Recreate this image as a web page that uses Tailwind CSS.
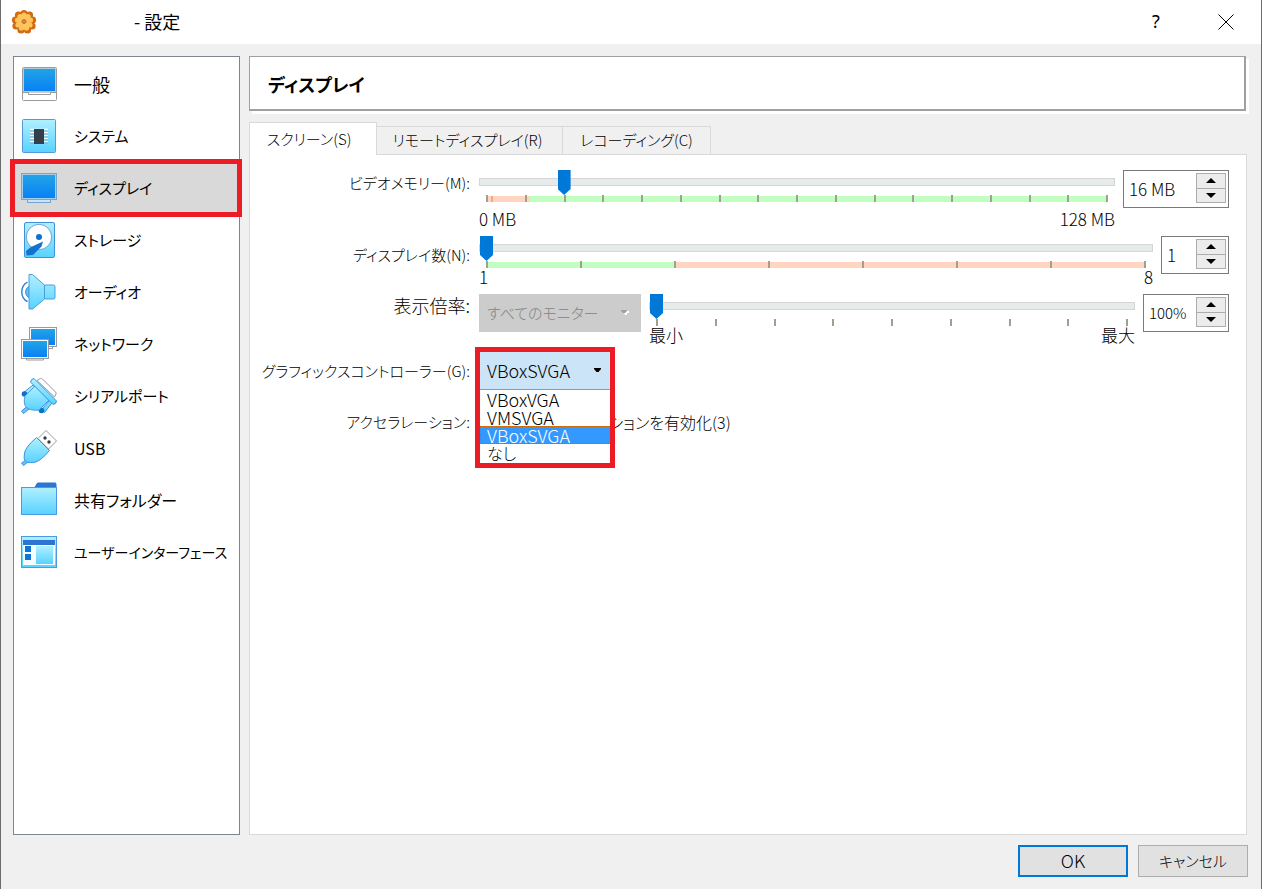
<!DOCTYPE html>
<html lang="ja">
<head>
    <meta charset="UTF-8">
    <meta name="viewport" content="width=device-width, initial-scale=1.0">
    <title>設定</title>
    <script src="https://cdn.jsdelivr.net/npm/@tailwindcss/browser@4"></script>
</head>
<body class="h-screen flex flex-col bg-[#f0f0f0] border-x border-[#6b6b6b] text-black text-[18px] leading-[18px] font-['Noto_Sans_CJK_JP',sans-serif] [font-feature-settings:'palt'] overflow-hidden">
    <!-- Shared gradients -->
    <svg class="absolute size-0" aria-hidden="true">
        <defs>
            <linearGradient id="screen" x1="0" y1="0" x2="0" y2="1"><stop offset="0" stop-color="#22a4e6"/><stop offset="1" stop-color="#0880f5"/></linearGradient>
            <linearGradient id="sky" x1="0" y1="0" x2="0" y2="1"><stop offset="0" stop-color="#b0f0ff"/><stop offset="1" stop-color="#58d2ff"/></linearGradient>
        </defs>
    </svg>

    <!-- Title bar -->
    <header class="h-11 shrink-0 flex items-center bg-white pl-[10px] pr-[17px]">
        <svg class="size-[26px]" viewBox="0 0 26 26">
            <g fill="#d26a10">
                <circle cx="13" cy="4.500" r="3.600"/><circle cx="18.500" cy="6" r="3.600"/><circle cx="21.500" cy="11" r="3.600"/><circle cx="21" cy="17" r="3.600"/><circle cx="16.500" cy="21" r="3.600"/><circle cx="10" cy="21" r="3.600"/><circle cx="5" cy="17" r="3.600"/><circle cx="4.500" cy="11" r="3.600"/><circle cx="7.500" cy="6" r="3.600"/>
            </g>
            <g fill="#ffc45e">
                <circle cx="13" cy="6" r="2.600"/><circle cx="17" cy="7.500" r="2.600"/><circle cx="19.500" cy="11" r="2.600"/><circle cx="19" cy="16" r="2.600"/><circle cx="15.500" cy="19" r="2.600"/><circle cx="10.500" cy="19" r="2.600"/><circle cx="7" cy="16" r="2.600"/><circle cx="6.500" cy="11" r="2.600"/><circle cx="9" cy="7.500" r="2.600"/><circle cx="13" cy="12.500" r="7"/>
            </g>
            <circle cx="13" cy="12.500" r="2" fill="#d98a3a" stroke="#c2701c"/>
        </svg>
        <h1 class="ml-[97px] pb-0.5">- 設定</h1>
        <button class="ml-auto w-9 h-8 pb-0.5 text-center font-['Noto_Sans',sans-serif]" aria-label="ヘルプ">?</button>
        <button class="ml-[34px] w-9 h-8 flex items-center justify-center" aria-label="閉じる">
            <svg class="size-4" viewBox="0 0 16 16" fill="none" stroke="#000"><path d="M.5 .5l15 15M15.500 .5l-15 15"/></svg>
        </button>
    </header>

    <main class="flex-1 min-h-0 flex gap-[9px] pt-3 pl-3 pr-[14px]">
        <!-- Categories -->
        <nav class="w-[227px] shrink-0 bg-white border border-[#7f8590] pt-px">
            <ul class="text-[15px] whitespace-nowrap">
                <li><a href="#" class="h-[52px] flex items-center gap-[17px] pl-[7px] text-[18px]">
                    <svg class="size-9" viewBox="0 0 36 36"><rect x="1.500" y="1.500" width="34" height="33" rx="1" fill="#fff" stroke="#9a9a9a"/><rect x="2.500" y="2.500" width="32" height="23" fill="url(#screen)" stroke="#b5cbd8"/><path d="M1 26.500h35" stroke="#9a9a9a"/><path d="M7.500 26.500v2h22v-2" fill="#fff" stroke="#9a9a9a"/></svg>
                    一般</a></li>
                <li><a href="#" class="h-[52px] flex items-center gap-[17px] pl-[7px]">
                    <svg class="size-9" viewBox="0 0 36 36"><rect x="1.500" y="1.500" width="33" height="33" rx="1" fill="url(#sky)" stroke="#559ad8"/><path d="M9 11.500h18M9 14.500h18M9 17.500h18M9 20.500h18M9 23.500h18" stroke="#fff" stroke-width="1.500"/><path d="M9 13h18M9 16h18M9 19h18M9 22h18M9 25h18" stroke="#6fa9c6" stroke-width=".8"/><rect x="13" y="11" width="10" height="15" fill="#343f4b"/></svg>
                    システム</a></li>
                <li class="relative"><a href="#" aria-current="page" class="h-[52px] flex items-center gap-[17px] pl-[7px] bg-[#d9d9d9]">
                    <svg class="size-9" viewBox="0 0 36 36"><rect x="6.500" y="29.500" width="23" height="3" fill="#c9e4fa" stroke="#76a6cc"/><rect x=".5" y="3.500" width="35" height="26" fill="#a5cdec" stroke="#76a6cc"/><rect x="2" y="5" width="32" height="23" fill="url(#screen)"/></svg>
                    ディスプレイ</a>
                    <span class="absolute -left-1 -right-[3px] -inset-y-[3px] border-[5px] border-[#ed1c24] pointer-events-none"></span></li>
                <li><a href="#" class="h-[52px] flex items-center gap-[17px] pl-[7px]">
                    <svg class="size-9" viewBox="0 0 36 36"><rect x="3.500" y=".5" width="30" height="35" rx="1.500" fill="url(#sky)" stroke="#3f91dc"/><circle cx="18" cy="15" r="12.700" fill="#fff" stroke="#6aa6d8"/><circle cx="18" cy="15" r="3" fill="#0e6fce"/><path d="M22 19.500l-1.500 5L12 33l-6.500.5-.5-4.500L10 25z" fill="#1472cf"/></svg>
                    ストレージ</a></li>
                <li><a href="#" class="h-[52px] flex items-center gap-[17px] pl-[7px]">
                    <svg class="size-9" viewBox="0 0 36 36"><path d="M8 12.500Q4.500 14 4.500 18T8 23.500z" fill="#5fc4f5" stroke="#3f91dc"/><path d="M6.500 8Q.8 11 .8 18t5.700 9.500" fill="none" stroke="#2f7fd2" stroke-width="1.400"/><path d="M8 .5h3.500L23.500 11H32.500q1.500 0 1.500 2v10q0 2-1.500 2h-9L11.500 35H8z" fill="url(#sky)" stroke="#4a9be0"/><path d="M23.500 11v14" stroke="#4a9be0"/></svg>
                    オーディオ</a></li>
                <li><a href="#" class="h-[52px] flex items-center gap-[17px] pl-[7px]">
                    <svg class="size-9" viewBox="0 0 36 36"><path d="M14 20.500h17.500v2H14z" fill="#fff" stroke="#9a9a9a"/><rect x="8.500" y="1.500" width="27" height="19" fill="#fff" stroke="#9a9a9a"/><rect x="10" y="3" width="24" height="16" fill="url(#screen)"/><path d="M5.500 31.500h17v2.500h-17z" fill="#fff" stroke="#9a9a9a"/><rect x=".5" y="13.500" width="27" height="19" fill="#fff" stroke="#9a9a9a"/><rect x="2" y="15" width="24" height="16" fill="url(#screen)"/></svg>
                    ネットワーク</a></li>
                <li><a href="#" class="h-[52px] flex items-center gap-[17px] pl-[7px]">
                    <svg class="size-9" viewBox="0 0 36 36"><path d="M16 2.500l3.500-2q1-.5 2 .5l13 13q1 1 .5 2l-1.500 3z" fill="#fff" stroke="#9a9a9a"/><path d="M12 7L2 15l3 3.500 9-8.500zM29 22l-9 10 3.500 2.500L31 25z" fill="url(#sky)" stroke="#3f91dc"/><circle cx="3.500" cy="16" r="2.800" fill="#0e6fce"/><circle cx="20.500" cy="32.500" r="2.800" fill="#0e6fce"/><path d="M6 28.500L.5 33l2 2.500L8 31z" fill="#62c8f7" stroke="#3f91dc"/><path d="M14 8L4 18q-2 8 1.500 11.500Q10 33 18 32L28 22z" fill="url(#sky)" stroke="#4a9be0"/><path d="M13 .5q-2.500 0-3.500 3.500L32 26.500q3.500-.5 3.500-3.500z" fill="url(#sky)" stroke="#3f91dc"/></svg>
                    シリアルポート</a></li>
                <li><a href="#" class="h-[52px] flex items-center gap-[17px] pl-[7px] text-[16px]">
                    <svg class="size-9" viewBox="0 0 36 36"><path d="M17 8.500l8-8L35.500 11l-8 8z" fill="#fff" stroke="#9a9a9a"/><circle cx="24" cy="8" r="1.700" fill="#343f4b"/><circle cx="28" cy="12" r="1.700" fill="#343f4b"/><path d="M6 29.500L.5 33l2 2.500L7 32z" fill="#62c8f7" stroke="#3f91dc"/><path d="M15.500 7.500L28.500 20.500Q19 32 12.500 32.500q-7 .5-8-1.500-2-1-1-8Q4.500 17 15.500 7.500z" fill="url(#sky)" stroke="#3f91dc"/></svg>
                    USB</a></li>
                <li><a href="#" class="h-[52px] flex items-center gap-[17px] pl-[7px] text-[16px]">
                    <svg class="size-9" viewBox="0 0 36 36"><path d="M13 6l3-5q.5-.5 1-.5H34.500l1 1.500v6H13z" fill="#2a76d2"/><rect x=".5" y="5.500" width="35" height="27" fill="url(#sky)" stroke="#4a9be0"/></svg>
                    共有フォルダー</a></li>
                <li><a href="#" class="h-[52px] flex items-center gap-[17px] pl-[7px] text-[14px]">
                    <svg class="size-9" viewBox="0 0 36 36"><rect x=".5" y="2.500" width="35" height="31" fill="url(#sky)" stroke="#4a9be0"/><rect x="2" y="6" width="32" height="5" fill="#2a76d2"/><rect x="2" y="11" width="32" height="20" fill="#f4fdff"/><rect x="4" y="12" width="6" height="6" fill="#1173d6"/><rect x="4" y="20" width="6" height="6" fill="#1173d6"/><rect x="15" y="12" width="17" height="18" fill="url(#sky)"/></svg>
                    ユーザーインターフェース</a></li>
            </ul>
        </nav>

        <section class="flex-1 min-w-0 flex flex-col">
            <div class="h-[55px] shrink-0 mr-px flex items-center pl-[18px] pt-0.5 bg-white border border-r-2 border-b-2 border-[#a0a0a0] shadow-[3px_3px_0_#fff]">
                <h2 class="font-bold">ディスプレイ</h2>
            </div>

            <!-- Tabs -->
            <div class="flex items-end mt-[11px] relative z-10 -mb-px text-[15px] font-light" role="tablist">
                <button role="tab" aria-selected="true" class="w-32 h-[33px] pr-2 bg-white border border-b-0 border-[#d9d9d9]">スクリーン(S)</button>
                <button role="tab" class="w-[187px] h-[29px] -ml-px pr-1 pb-0.5 border border-[#d9d9d9]">リモートディスプレイ(R)</button>
                <button role="tab" class="w-[149px] h-[29px] -ml-px pb-0.5 border border-[#d9d9d9]">レコーディング(C)</button>
            </div>

            <div class="flex-1 bg-white border border-[#d9d9d9] pt-[15px] pl-[10px] pr-[17px]" role="tabpanel">
                <form class="grid grid-cols-[210px_minmax(0,1fr)] gap-x-[9px] gap-y-2 text-[17px] font-light whitespace-nowrap">
                    <!-- Video memory -->
                    <label for="vram" class="h-[26px] flex items-center justify-end text-[15px]">ビデオメモリー(M):</label>
                    <div class="flex gap-2">
                        <div class="flex-1">
                            <input id="vram" type="range" min="0" max="128" value="16" class="block w-full h-6 mb-px appearance-none bg-transparent [&::-webkit-slider-runnable-track]:h-2 [&::-webkit-slider-runnable-track]:bg-[#e7eaea] [&::-webkit-slider-runnable-track]:border [&::-webkit-slider-runnable-track]:border-[#d6d6d6] [&::-webkit-slider-thumb]:appearance-none [&::-webkit-slider-thumb]:w-[13px] [&::-webkit-slider-thumb]:h-[25px] [&::-webkit-slider-thumb]:-mt-[9px] [&::-webkit-slider-thumb]:bg-[#0078d7] [&::-webkit-slider-thumb]:[clip-path:polygon(0_0,100%_0,100%_76%,50%_100%,0_76%)]">
                            <div class="flex justify-between mx-[7px] h-[7px] bg-[linear-gradient(to_right,#ffd4c0_0.8%,#f0aa84_0.8%,#f0aa84_1.1%,#ffd4c0_1.1%,#ffd4c0_7.1%,#c0ffc0_7.1%)] bg-[length:100%_6px] bg-bottom bg-no-repeat">
                                <i class="w-0.5 bg-[#a0a090]"></i><i class="w-0.5 bg-[#a0a090]"></i><i class="w-0.5 bg-[#a0a090]"></i><i class="w-0.5 bg-[#a0a090]"></i><i class="w-0.5 bg-[#a0a090]"></i><i class="w-0.5 bg-[#a0a090]"></i><i class="w-0.5 bg-[#a0a090]"></i><i class="w-0.5 bg-[#a0a090]"></i><i class="w-0.5 bg-[#a0a090]"></i><i class="w-0.5 bg-[#a0a090]"></i><i class="w-0.5 bg-[#a0a090]"></i><i class="w-0.5 bg-[#a0a090]"></i><i class="w-0.5 bg-[#a0a090]"></i><i class="w-0.5 bg-[#a0a090]"></i><i class="w-0.5 bg-[#a0a090]"></i><i class="w-0.5 bg-[#a0a090]"></i><i class="w-0.5 bg-[#a0a090]"></i>
                            </div>
                            <div class="flex justify-between mt-2"><span>0 MB</span><span>128 MB</span></div>
                        </div>
                        <div class="w-[106px] h-[38px] flex border border-[#7a7a7a] p-0.5">
                            <input type="text" value="16 MB" aria-label="ビデオメモリー" class="flex-1 min-w-0 pl-[3px]">
                            <div class="w-[30px] h-[30px] flex flex-col border border-[#adadad] bg-[#ececec]">
                                <button type="button" aria-label="増やす" class="flex-1 flex items-center justify-center border-b border-[#adadad]"><svg class="w-[10px] h-[5px]" viewBox="0 0 10 5"><path d="M5 0l5 5H0z"/></svg></button>
                                <button type="button" aria-label="減らす" class="flex-1 flex items-center justify-center"><svg class="w-[10px] h-[5px]" viewBox="0 0 10 5"><path d="M0 0h10L5 5z"/></svg></button>
                            </div>
                        </div>
                    </div>

                    <!-- Monitor count -->
                    <label for="monitors" class="h-[38px] flex items-center justify-end text-[15px]">ディスプレイ数(N):</label>
                    <div class="flex gap-2">
                        <div class="flex-1">
                            <input id="monitors" type="range" min="1" max="8" value="1" class="block w-full h-6 mb-px appearance-none bg-transparent [&::-webkit-slider-runnable-track]:h-2 [&::-webkit-slider-runnable-track]:bg-[#e7eaea] [&::-webkit-slider-runnable-track]:border [&::-webkit-slider-runnable-track]:border-[#d6d6d6] [&::-webkit-slider-thumb]:appearance-none [&::-webkit-slider-thumb]:w-[13px] [&::-webkit-slider-thumb]:h-[25px] [&::-webkit-slider-thumb]:-mt-[9px] [&::-webkit-slider-thumb]:bg-[#0078d7] [&::-webkit-slider-thumb]:[clip-path:polygon(0_0,100%_0,100%_76%,50%_100%,0_76%)]">
                            <div class="flex justify-between mx-[7px] h-[7px] bg-[linear-gradient(to_right,#c0ffc0_28.7%,#ffd4c0_28.7%)] bg-[length:100%_6px] bg-bottom bg-no-repeat">
                                <i class="w-0.5 bg-[#a0a090]"></i><i class="w-0.5 bg-[#a0a090]"></i><i class="w-0.5 bg-[#a0a090]"></i><i class="w-0.5 bg-[#a0a090]"></i><i class="w-0.5 bg-[#a0a090]"></i><i class="w-0.5 bg-[#a0a090]"></i><i class="w-0.5 bg-[#a0a090]"></i><i class="w-0.5 bg-[#a0a090]"></i>
                            </div>
                            <div class="flex justify-between"><span>1</span><span>8</span></div>
                        </div>
                        <div class="w-[68px] h-[38px] flex border border-[#7a7a7a] p-0.5">
                            <input type="text" value="1" aria-label="ディスプレイ数" class="flex-1 min-w-0 pl-[3px]">
                            <div class="w-[30px] h-[30px] flex flex-col border border-[#adadad] bg-[#ececec]">
                                <button type="button" aria-label="増やす" class="flex-1 flex items-center justify-center border-b border-[#adadad]"><svg class="w-[10px] h-[5px]" viewBox="0 0 10 5"><path d="M5 0l5 5H0z"/></svg></button>
                                <button type="button" aria-label="減らす" class="flex-1 flex items-center justify-center"><svg class="w-[10px] h-[5px]" viewBox="0 0 10 5"><path d="M0 0h10L5 5z"/></svg></button>
                            </div>
                        </div>
                    </div>

                    <!-- Scale factor -->
                    <label for="scale" class="h-[22px] flex items-center justify-end text-[18px]">表示倍率:</label>
                    <div class="flex gap-2">
                        <div class="relative w-[162px] h-[38px]">
                            <select disabled aria-label="モニター" class="size-full appearance-none bg-[#cccccc] text-[#838383] text-[15px] pl-2 opacity-100"><option>すべてのモニター</option></select>
                            <svg class="absolute right-3 top-4 w-2 h-[5px]" viewBox="0 0 8 5"><path d="M2 1h6v2H6v2H4z" fill="#fff"/><path d="M0 0h6v1L4 3H2L0 1z" fill="#a0a0a0"/></svg>
                        </div>
                        <div class="flex-1">
                            <input id="scale" type="range" min="100" max="200" value="100" class="block w-full h-6 mb-px appearance-none bg-transparent [&::-webkit-slider-runnable-track]:h-2 [&::-webkit-slider-runnable-track]:bg-[#e7eaea] [&::-webkit-slider-runnable-track]:border [&::-webkit-slider-runnable-track]:border-[#d6d6d6] [&::-webkit-slider-thumb]:appearance-none [&::-webkit-slider-thumb]:w-[13px] [&::-webkit-slider-thumb]:h-[25px] [&::-webkit-slider-thumb]:-mt-[9px] [&::-webkit-slider-thumb]:bg-[#0078d7] [&::-webkit-slider-thumb]:[clip-path:polygon(0_0,100%_0,100%_76%,50%_100%,0_76%)]">
                            <div class="flex justify-between mx-[7px] h-[7px]">
                                <i class="w-0.5 bg-[#a0a090]"></i><i class="w-0.5 bg-[#a0a090]"></i><i class="w-0.5 bg-[#a0a090]"></i><i class="w-0.5 bg-[#a0a090]"></i><i class="w-0.5 bg-[#a0a090]"></i><i class="w-0.5 bg-[#a0a090]"></i><i class="w-0.5 bg-[#a0a090]"></i><i class="w-0.5 bg-[#a0a090]"></i><i class="w-0.5 bg-[#a0a090]"></i>
                            </div>
                            <div class="flex justify-between"><span>最小</span><span>最大</span></div>
                        </div>
                        <div class="w-[86px] h-[38px] flex border border-[#7a7a7a] p-0.5">
                            <input type="text" value="100%" aria-label="表示倍率" class="flex-1 min-w-0 pl-[3px] text-[15px]">
                            <div class="w-[30px] h-[30px] flex flex-col border border-[#adadad] bg-[#ececec]">
                                <button type="button" aria-label="増やす" class="flex-1 flex items-center justify-center border-b border-[#adadad]"><svg class="w-[10px] h-[5px]" viewBox="0 0 10 5"><path d="M5 0l5 5H0z"/></svg></button>
                                <button type="button" aria-label="減らす" class="flex-1 flex items-center justify-center"><svg class="w-[10px] h-[5px]" viewBox="0 0 10 5"><path d="M0 0h10L5 5z"/></svg></button>
                            </div>
                        </div>
                    </div>

                    <!-- Graphics controller -->
                    <label for="gpu" class="h-[38px] flex items-center justify-end text-[15px]">グラフィックスコントローラー(G):</label>
                    <div class="relative z-10 w-[132px] h-[38px] text-[18px]">
                        <select id="gpu" class="size-full appearance-none bg-[#cce4f7] pl-2 pb-0.5 border-b border-[#7f9db9]">
                            <option>VBoxVGA</option>
                            <option>VMSVGA</option>
                            <option selected>VBoxSVGA</option>
                            <option>なし</option>
                        </select>
                        <svg class="absolute right-[10px] top-4 w-[7px] h-1" viewBox="0 0 7 4"><path d="M0 0h7v1L4.500 4h-2L0 1z"/></svg>
                        <ul role="listbox" class="absolute top-full inset-x-0 bg-white border-l border-[#7f9db9]">
                            <li role="option" class="pl-[7px]">VBoxVGA</li>
                            <li role="option" class="pl-[7px]">VMSVGA</li>
                            <li role="option" aria-selected="true" class="pl-1.5 leading-4 bg-[#3399ff] text-white border border-dotted border-[#cc6600]">VBoxSVGA</li>
                            <li role="option" class="pl-[7px] pb-px text-[16px]">なし</li>
                        </ul>
                        <span class="absolute -left-1 -right-1 -top-[5px] h-[121px] border-[5px] border-[#ed1c24] pointer-events-none"></span>
                    </div>

                    <!-- Acceleration -->
                    <span class="mt-3 h-6 flex items-center justify-end text-[15px]">アクセラレーション:</span>
                    <label class="mt-3 h-6 flex items-center gap-[7px] text-[16px]">
                        <input type="checkbox" class="size-4">3Dアクセラレーションを有効化(3)
                    </label>
                </form>
            </div>
        </section>
    </main>

    <footer class="shrink-0 flex justify-end gap-[10px] pt-[10px] pb-3 pr-[13px] font-light">
        <button class="w-[110px] h-8 pb-0.5 bg-[#e1e1e1] border-2 border-[#0078d7]">OK</button>
        <button class="w-[110px] h-8 bg-[#e1e1e1] border border-[#adadad] text-[15px]">キャンセル</button>
    </footer>
</body>
</html>
